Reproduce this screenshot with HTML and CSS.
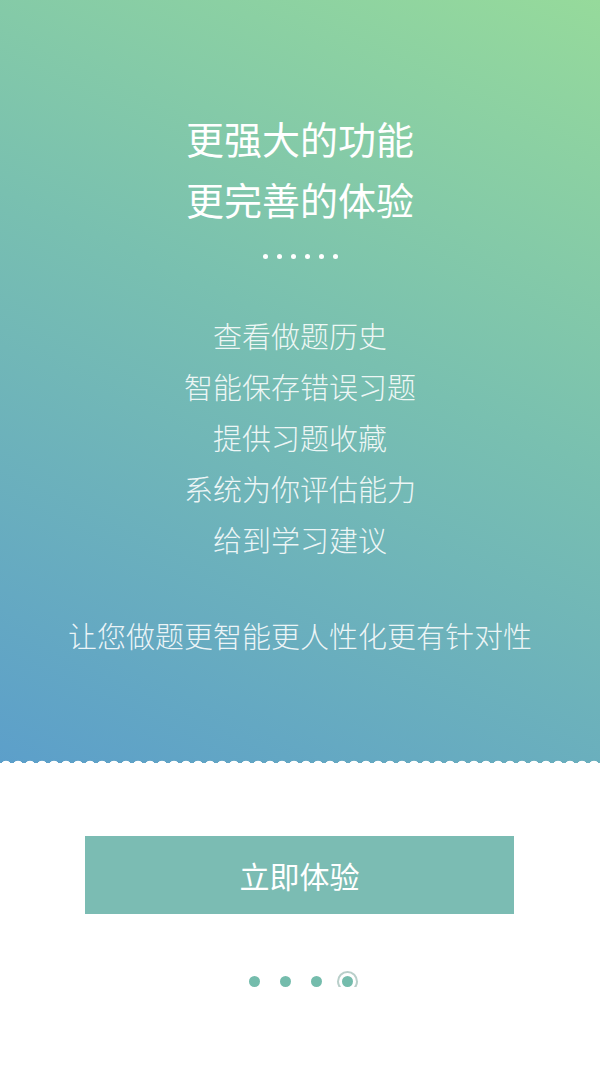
FILE: index.html
```html
<!DOCTYPE html>
<html lang="zh-CN">
<head>
    <meta charset="UTF-8">
    <meta name="viewport" content="width=device-width, initial-scale=1.0">
    <title>新版介绍</title>
    <link rel="stylesheet" href="styles.css">
</head>
<body>

    <section class="hero">
        <h1 class="hero-title">更强大的功能<br>更完善的体验</h1>
        <div class="hero-dots">
            <span></span><span></span><span></span><span></span><span></span><span></span>
        </div>
        <ul class="feature-list">
            <li>查看做题历史</li>
            <li>智能保存错误习题</li>
            <li>提供习题收藏</li>
            <li>系统为你评估能力</li>
            <li>给到学习建议</li>
        </ul>
        <p class="hero-summary">让您做题更智能更人性化更有针对性</p>
        <div class="wave"></div>
    </section>

    <section class="start-section">
        <button class="start-button">立即体验</button>
        <div class="pager">
            <span class="pager-dot"></span>
            <span class="pager-dot"></span>
            <span class="pager-dot"></span>
            <span class="pager-dot active"></span>
        </div>
    </section>

</body>
</html>
```

FILE: styles.css
```css
body {
    margin: 0;
    padding: 0;
    background-color: #fff;
    font-family: "Noto Sans CJK SC", "Noto Sans", sans-serif;
}

.hero {
    position: relative;
    height: 763px;
    box-sizing: border-box;
    padding-top: 107px;
    text-align: center;
    color: #fff;
    background: linear-gradient(205deg, #96da9b 0%, #79c0b0 45%, #5c9fca 100%);
}

.hero-title {
    margin: 0;
    font-size: 38px;
    font-weight: 400;
    line-height: 61px;
}

.hero-dots {
    display: flex;
    justify-content: center;
    gap: 9px;
    margin-top: 25px;
}

.hero-dots span {
    width: 5px;
    height: 5px;
    border-radius: 50%;
    background-color: #fff;
}

.feature-list {
    list-style: none;
    margin: 51px 0 0;
    padding: 0;
    font-size: 29px;
    font-weight: 300;
    line-height: 51px;
    color: rgba(255, 255, 255, 0.88);
}

.hero-summary {
    margin: 45px 0 0;
    font-size: 29px;
    font-weight: 300;
    line-height: 51px;
    color: rgba(255, 255, 255, 0.88);
}

/* scalloped edge at the bottom of the hero */
.wave {
    position: absolute;
    left: 0;
    right: 0;
    bottom: -3px;
    height: 6px;
    background: radial-gradient(circle at 50% 100%, #fff 5px, transparent 5.6px);
    background-size: 12px 6px;
    background-repeat: repeat-x;
}

.start-section {
    padding-top: 73px;
    text-align: center;
}

.start-button {
    display: block;
    width: 429px;
    height: 78px;
    margin-left: 85px;
    background-color: #7bbcb3;
    color: #fff;
    border: none;
    font-family: inherit;
    font-size: 30px;
    cursor: pointer;
}

.pager {
    display: flex;
    justify-content: center;
    align-items: center;
    gap: 20px;
    margin-top: 62px;
    padding-left: 2px;
}

.pager-dot {
    width: 11px;
    height: 11px;
    border-radius: 50%;
    background-color: #74bcac;
}

.pager-dot.active {
    box-shadow: 0 0 0 3px #fff, 0 0 0 5px #b9cfca;
}
```
